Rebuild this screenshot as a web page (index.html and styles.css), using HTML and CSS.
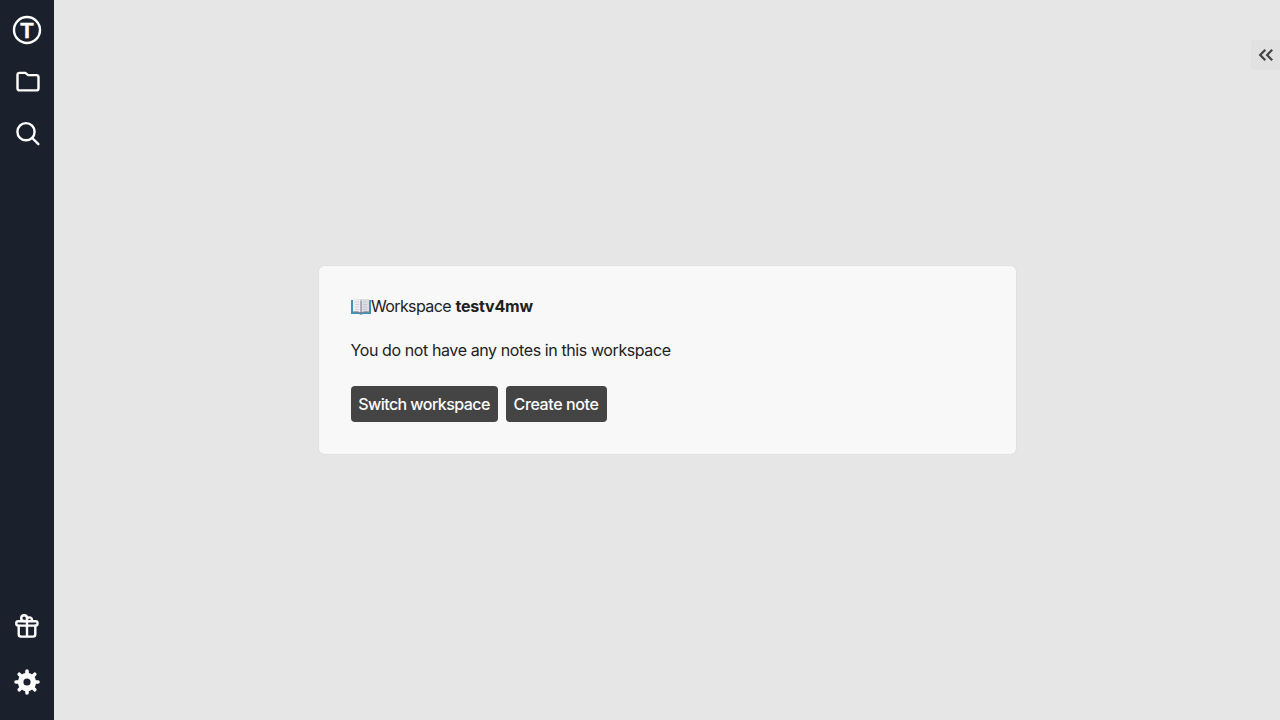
FILE: index.html
```html
<!DOCTYPE html>
<html lang="en">
<head>
<meta charset="utf-8">
<title>Workspace</title>
<link rel="stylesheet" href="styles.css">
</head>
<body>
<div class="app">
  <nav class="sidebar">
    <a class="item"><svg width="30" height="30" viewBox="0 0 30 30"><circle cx="15" cy="15" r="13" fill="none" stroke="#fff" stroke-width="2.4"/><text class="logo" x="15" y="22.8" text-anchor="middle">T</text></svg></a>
    <a class="item icon"><svg width="26" height="26" viewBox="0 0 26 26"><path d="M4.7 3.9H10.3L13.2 6.1H21.3Q23.5 6.1 23.5 8.3V19.2Q23.5 21.4 21.3 21.4H4.7Q2.5 21.4 2.5 19.2V6.1Q2.5 3.9 4.7 3.9Z"/></svg></a>
    <a class="item icon"><svg width="26" height="26" viewBox="0 0 26 26"><circle cx="11" cy="10.7" r="8.6"/><path d="M17.2 17L23.4 23.2"/></svg></a>
    <span class="spacer"></span>
    <a class="item icon"><svg width="26" height="26" viewBox="0 0 26 26"><rect x="2.3" y="8.2" width="21.2" height="4.4" rx="1.8"/><path d="M4.7 12.6V21.3Q4.7 23.6 7 23.6H19Q21.3 23.6 21.3 21.3V12.6M13 8V23.6M13 8H9.8A2.9 2.9 0 1 1 13 5.1ZM13 8V6A2.6 2.6 0 1 1 17.8 8"/></svg></a>
    <a class="item gear"><svg width="26" height="26" viewBox="-13 -13 26 26"><circle r="6.4" fill="none" stroke="#fff" stroke-width="5.6"/><g stroke="#fff" stroke-width="3.6" stroke-linecap="round"><path d="M0-8V-11M0 8V11M-8 0H-11M8 0H11M-5.8-5.8L-7.8-7.8M5.8-5.8L7.8-7.8M-5.8 5.8L-7.8 7.8M5.8 5.8L7.8 7.8"/></g></svg></a>
  </nav>
  <main class="main">
    <section class="card">
      <p class="line title"><svg class="book" width="20" height="16" viewBox="0 0 20 16"><path d="M0 1H20V15H12Q10 16.5 8 15H0Z" fill="#3f91b5"/><path d="M2 0H18V13H2Z" fill="#d9d9e0"/><path d="M2 .4Q7-.6 10 1.6V13.5Q7 11.5 2 12.5Z" fill="#eeeef2"/><path d="M18 .4Q13-.6 10 1.6V13.5Q13 11.5 18 12.5Z" fill="#dcdce3"/><path d="M2 13Q7 12 10 14Q13 12 18 13" fill="none" stroke="#8d8690"/><path d="M10 1.5V14" stroke="#77727c"/><path d="M4 3H8M4 5.5H8M4 8H8M4 10.5H8M12 3H16M12 5.5H16M12 8H16M12 10.5H16" stroke="#bcbcc6" stroke-width=".6"/></svg><span class="word">Workspace</span><strong class="name">testv4mw</strong></p>
      <p class="line message">You do not have any notes in this workspace</p>
      <div class="actions"><button class="button switch">Switch workspace</button><button class="button create">Create note</button></div>
    </section>
    <button class="toggle" aria-label="Expand"><svg width="16" height="14" viewBox="0 0 16 14"><path d="M7.3 1.7L2.2 7L7.3 12.3M14.2 1.7L9.1 7L14.2 12.3"/></svg></button>
  </main>
</div>
</body>
</html>
```
FILE: styles.css
```css
* { box-sizing: border-box; }
body { margin: 0; font: 16px/24px Inter, sans-serif; color: #212121; }
.app { display: flex; height: 100vh; }
.sidebar { width: 54px; background: #1b212c; display: flex; flex-direction: column; align-items: center; padding: 4px 0 12px; }
.item { height: 52px; display: flex; align-items: center; justify-content: center; }
.item svg { display: block; }
.spacer { flex: 1; }
.gear { margin-top: 4px; }
.icon { padding-left: 2px; }
.spacer + .icon { padding-left: 0; }
.icon svg { fill: none; stroke: #fff; stroke-width: 2.4; stroke-linecap: round; stroke-linejoin: round; }
.logo { font: bold 22px "Liberation Sans", sans-serif; fill: #fff; stroke: #fff; stroke-width: .3; }
.main { flex: 1; position: relative; display: flex; align-items: center; justify-content: center; background: #e6e6e6; }
.card { width: 697px; height: 188px; padding: 28px 32px 32px; background: #f8f8f8; border-radius: 5px; box-shadow: 0 0 1px #bbb; }
.line { margin: 0 0 20px; height: 24px; white-space: pre; letter-spacing: -.4px; }
.title { display: flex; }
.book { margin: 5px .5px 0 0; }
.word { width: 84.5px; letter-spacing: -.62px; }
.name { font-weight: 700; letter-spacing: -.2px; }
.actions { display: flex; gap: 8px; margin-top: 24px; }
.button { height: 36px; padding: 0; border: 0; border-radius: 4px; background: #444; color: #fff; font: inherit; font-weight: 500; letter-spacing: -.55px; white-space: nowrap; }
.switch { width: 147px; }
.create { width: 101px; letter-spacing: -.4px; }
.toggle { position: absolute; right: 0; top: 40px; width: 29px; height: 30px; padding: 0 0 1px 1px; border: 0; border-radius: 4px 0 0 4px; background: #e1e1e1; display: flex; align-items: center; justify-content: center; }
.toggle path { fill: none; stroke: #444; stroke-width: 2.2; }
```
